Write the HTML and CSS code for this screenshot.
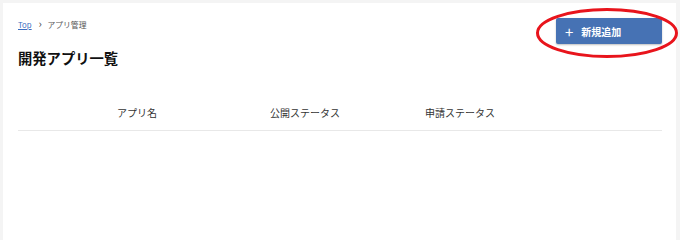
FILE: index.html
```html
<!DOCTYPE html>
<html lang="ja">
<head>
<meta charset="utf-8">
<title>開発アプリ一覧</title>
<link rel="stylesheet" href="styles.css">
</head>
<body>
<div class="panel">
  <div class="pagehead">
    <div>
      <div class="crumbs">
        <a href="#" class="crumblink">Top</a>
        <span class="crumbsep">&rsaquo;</span>
        <span>アプリ管理</span>
      </div>
      <h1 class="title">開発アプリ一覧</h1>
    </div>
    <div class="addwrap">
      <button type="button" class="addbtn"><span class="plus">+</span>新規追加</button>
      <svg class="mark" width="144" height="52" viewBox="0 0 144 52">
        <ellipse cx="72" cy="26" rx="69.5" ry="23.5" fill="none" stroke="#e8141c" stroke-width="3"/>
      </svg>
    </div>
  </div>
  <div class="listhead">
    <div>アプリ名</div>
    <div>公開ステータス</div>
    <div>申請ステータス</div>
  </div>
</div>
</body>
</html>
```
FILE: styles.css
```css
html, body {
    margin: 0;
    height: 100%;
    background: #f4f4f4;
    font-family: "Noto Sans CJK JP", "Noto Sans", sans-serif;
    color: #333;
}
.panel {
    box-sizing: border-box;
    margin: 3px 4px 0 3px;
    min-height: 240px;
    background: #fff;
    padding: 15px 14px 0 15px;
}
.pagehead {
    display: flex;
    justify-content: space-between;
    align-items: flex-start;
}
.crumbs {
    font-size: 7.8px;
    line-height: 10px;
    color: #555;
}
.crumblink {
    color: #3a6cc0;
    text-decoration: underline;
}
.crumbsep {
    margin: 0 4px 0 5px;
    font-size: 11px;
    color: #444;
}
.title {
    margin: 18px 0 0 0;
    font-size: 14.3px;
    line-height: 20px;
    font-weight: bold;
    color: #111;
}
.addwrap {
    position: relative;
}
.addbtn {
    display: flex;
    align-items: center;
    box-sizing: border-box;
    width: 106px;
    height: 26px;
    padding: 0 0 0 9px;
    border: 0;
    border-radius: 2px;
    background: #4672b4;
    box-shadow: 0 1px 2px rgba(0,0,0,0.25);
    color: #fff;
    font-family: inherit;
    font-size: 10px;
    font-weight: bold;
}
.plus {
    font-size: 15px;
    font-weight: normal;
    margin-right: 8px;
    line-height: 1;
}
.mark {
    position: absolute;
    left: -21px;
    top: -11px;
}
.listhead {
    display: grid;
    grid-template-columns: 153px 155px 1fr;
    margin-top: 30px;
    padding: 9px 0 11px 99px;
    border-bottom: 1px solid #e8e8e8;
    font-size: 10px;
    line-height: 12px;
    color: #333;
}
```
